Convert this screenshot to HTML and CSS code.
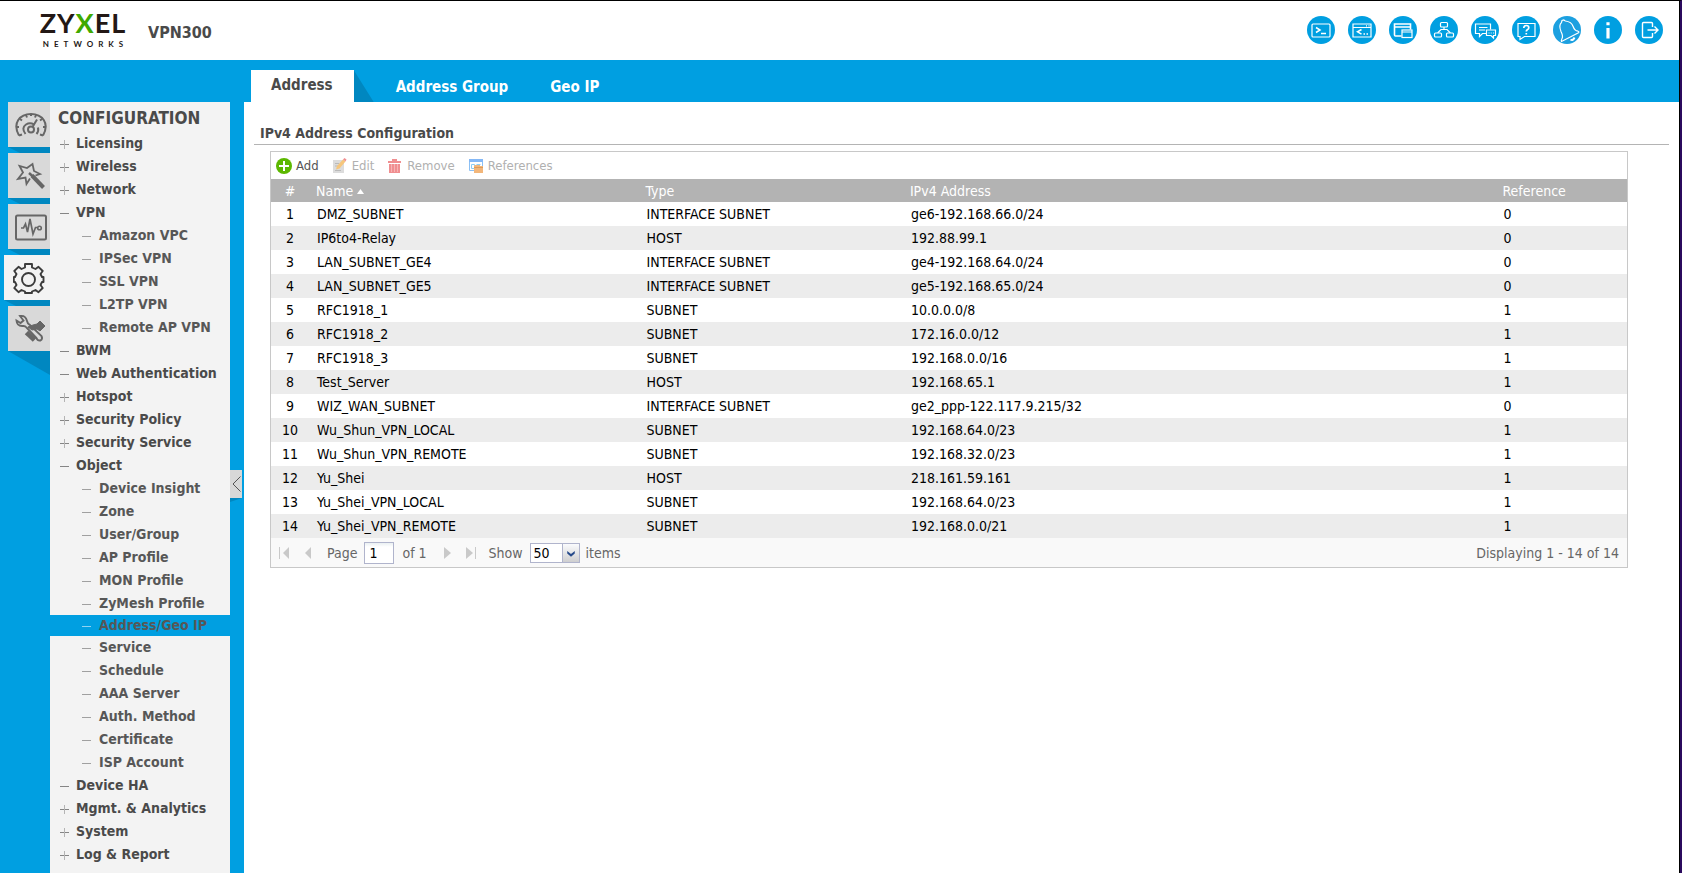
FILE: index.html
```html
<!DOCTYPE html>
<html lang="en">
<head>
<meta charset="utf-8">
<title>VPN300</title>
<link rel="stylesheet" href="styles.css">
</head>
<body>
<div class="app">
<header class="topbar">
  <div class="logo"><span class="logo-name">ZY<span class="logo-x">X</span>EL</span><span class="logo-sub">NETWORKS</span></div>
  <h1 class="model">VPN300</h1>
  <nav class="tools" aria-label="Tools">
    <button class="tool" aria-label="Web console"><svg viewBox="0 0 28 28"><rect x="5" y="8" width="18" height="13" rx="1"/><path d="M9 11.500l4 2.500-4 2.500M14 17.500h5" stroke-width="1.500"/></svg></button>
    <button class="tool" aria-label="CLI"><svg viewBox="0 0 28 28"><path d="M5 8h18v13h-18zM5 11.500h18M18 9.800h1M20.500 9.800h1"/><path d="M13.500 13.500l-4 2.300 4 2.300M15.500 18h1.500M18.500 18h1.500" stroke-width="1.500"/></svg></button>
    <button class="tool" aria-label="Object reference"><svg viewBox="0 0 28 28"><path d="M12.500 20H6.500q-1 0-1-1V8h16v5.500M5.500 11h16" stroke-width="1.600"/><rect x="13" y="14" width="10" height="7.500"/><path d="M13 16h10"/></svg></button>
    <button class="tool" aria-label="Site map"><svg viewBox="0 0 28 28"><rect x="10.500" y="6.500" width="7" height="4.500" rx="1"/><rect x="4.500" y="17" width="7" height="4" rx="1"/><rect x="16.500" y="17" width="7" height="4" rx="1"/><path d="M14 11v2.500M8 17v-.5l3-3h6l3 3v.5"/></svg></button>
    <button class="tool" aria-label="Forum"><svg viewBox="0 0 28 28"><path d="M15 17.500h-3.500l-3 3v-3H4.500V8h15v5.500M8 11.500h8.500M8 14h6"/><path d="M15.500 14h9v5.500h-2v2.500l-2.500-2.500h-4.500zM17.500 17h1M19.700 17h1M21.900 17h1"/></svg></button>
    <button class="tool" aria-label="Help"><svg viewBox="0 0 28 28"><path d="M6 7.500h17v13H12.500L8 23.500v-3H6z"/><path d="M11.800 12q0-2.500 2.500-2.500t2.500 2.200q0 1.200-1.500 2-1 .6-1 1.700M14.300 17v1.600" stroke-width="1.700"/></svg></button>
    <button class="tool tool-bell" aria-label="Notifications"><svg viewBox="0 0 28 28"><path d="M8.500 25.500q-.5-1 .3-2.500Q10.500 20.500 8 15.500 5.500 9 8.500 6.500l.5-2 1.800-.5 1.500 1q6.200.7 7.700 5.200 1.500 4.500 5 5 1.500.5.500 1.500z"/><path d="M17.500 23.500q2.500 1.500 4-2" stroke-width="2"/></svg></button>
    <button class="tool" aria-label="About"><svg viewBox="0 0 28 28"><path d="M14 6.300v3" stroke-width="3.200"/><path d="M14 12v10.500" stroke-width="3.200"/></svg></button>
    <button class="tool" aria-label="Log out"><svg viewBox="0 0 28 28"><path d="M17.500 11V7.500q0-1-1-1h-8q-1 0-1 1v13q0 1 1 1h8q1 0 1-1V17M12.500 14H23M19.500 10.500L23 14l-3.500 3.500" stroke-width="1.400"/></svg></button>
  </nav>
</header>
<div class="body">
  <nav class="rail" aria-label="Sections">
    <button class="rail-item" aria-label="Dashboard"><svg viewBox="0 0 32 32"><g stroke-width="2"><path d="M4 26.500C-3 14 5 5 16 5s19 9 12 21.500"/><path d="M4 26.500l3-1M28 26.500l-3-1M1 18h3M31 18h-3M5 10l2 1.500M27 10l-2 1.500M11 6l1 2.500M21 6l-1 2.500M16 5v2"/><path d="M10.500 25q-4.500-6 .5-9.500 4-2.500 8 0M21.500 25q2.500-3 1.500-6.500"/><circle cx="16" cy="20.500" r="3"/><path d="M17.500 18L22 10.500"/></g></svg></button>
    <button class="rail-item" aria-label="Quick setup"><svg viewBox="0 0 32 32"><path d="M20.500 15.500L25 14l-6-3-1.500-7L12 8 4.500 6l3.500 6.500-5 6.500 7.500-1.500L11.500 24l3.500-5.500" stroke-width="1.800"/><path d="M14 13l4 3.500" stroke-width="2.500"/><path d="M17 15.500L28.500 27.500" stroke-width="4"/></svg></button>
    <button class="rail-item" aria-label="Monitoring"><svg viewBox="0 0 32 32"><rect x="1" y="4.500" width="30" height="24" rx="1.500" stroke-width="2"/><path d="M6 17h2.500l2-4 2 8 2.500-13 3 15 2.500-6.500h2" stroke-width="1.700"/><circle cx="24.500" cy="17" r="1.800" stroke-width="1.600"/></svg></button>
    <button class="rail-item is-active" aria-label="Configuration" aria-current="page"><svg viewBox="0 0 32 32"><path d="M12 2h7v3.500l3.500 1.500 3-2.200 4.200 4.200-2.200 3 1.500 3h1.500v5h-1.500l-1.500 3 2.200 3-4.200 4.200-3-2.200-3.500 1.500V31h-7v-1.500L8.500 28l-3 2.200L1.300 26l2.200-3L2 20H.8v-5H2l1.500-3-2.200-3 4.200-4.200 3 2.200L12 5.500z" stroke-width="1.900" stroke-linejoin="round"/><circle cx="15.500" cy="17.500" r="6.500" stroke-width="1.900"/></svg></button>
    <button class="rail-item" aria-label="Maintenance"><svg viewBox="0 0 32 32"><path d="M5 3l3.500 4.500L5.500 10 1.500 7.500Q2 13.500 8 13q2-.3 3.500 1.500L21.500 25q1 3 4 2.500 2.500-1.500 1-4.500L15 12Q12.500 11 12 8 10.500 2 5 3z" stroke-width="1.900"/><path d="M11.500 19.500l8 7.500" stroke-width="5"/><path d="M13 14l5-2 4-1 3-3 5 5-5 5-3-2-5 1z" class="solid"/></svg></button>
    <div class="rail-tail"></div>
  </nav>
  <aside class="sidebar">
    <h2 class="side-title">CONFIGURATION</h2>
    <ul class="tree">
      <li><a class="node plus" href="#">Licensing</a></li>
      <li><a class="node plus" href="#">Wireless</a></li>
      <li><a class="node plus" href="#">Network</a></li>
      <li><a class="node" href="#">VPN</a>
        <ul class="branch">
          <li><a class="node" href="#">Amazon VPC</a></li>
          <li><a class="node" href="#">IPSec VPN</a></li>
          <li><a class="node" href="#">SSL VPN</a></li>
          <li><a class="node" href="#">L2TP VPN</a></li>
          <li><a class="node" href="#">Remote AP VPN</a></li>
        </ul>
      </li>
      <li><a class="node" href="#">BWM</a></li>
      <li><a class="node" href="#">Web Authentication</a></li>
      <li><a class="node plus" href="#">Hotspot</a></li>
      <li><a class="node plus" href="#">Security Policy</a></li>
      <li><a class="node plus" href="#">Security Service</a></li>
      <li><a class="node" href="#">Object</a>
        <ul class="branch">
          <li><a class="node" href="#">Device Insight</a></li>
          <li><a class="node" href="#">Zone</a></li>
          <li><a class="node" href="#">User/Group</a></li>
          <li><a class="node" href="#">AP Profile</a></li>
          <li><a class="node" href="#">MON Profile</a></li>
          <li><a class="node" href="#">ZyMesh Profile</a></li>
          <li><a class="node is-selected" href="#" aria-current="page">Address/Geo IP</a></li>
          <li><a class="node" href="#">Service</a></li>
          <li><a class="node" href="#">Schedule</a></li>
          <li><a class="node" href="#">AAA Server</a></li>
          <li><a class="node" href="#">Auth. Method</a></li>
          <li><a class="node" href="#">Certificate</a></li>
          <li><a class="node" href="#">ISP Account</a></li>
        </ul>
      </li>
      <li><a class="node" href="#">Device HA</a></li>
      <li><a class="node plus" href="#">Mgmt. &amp; Analytics</a></li>
      <li><a class="node plus" href="#">System</a></li>
      <li><a class="node plus" href="#">Log &amp; Report</a></li>
    </ul>
  </aside>
  <div class="gutter"><button class="collapse" aria-label="Collapse menu"><svg viewBox="0 0 12 28"><path d="M10.500 6.500L3 14l7.500 7.500"/></svg></button></div>
  <main class="main">
    <nav class="tabs" aria-label="Address pages">
      <a class="tab is-current" href="#" aria-current="page">Address</a>
      <a class="tab" href="#">Address Group</a>
      <a class="tab" href="#">Geo IP</a>
    </nav>
    <section class="content">
      <h2 class="section-title">IPv4 Address Configuration</h2>
      <div class="panel">
        <div class="toolbar">
          <button class="action"><svg viewBox="0 0 16 16"><circle cx="8" cy="8" r="8" fill="#5cb800"/><path d="M8 3v10M3 8h10" stroke="#fff" stroke-width="2"/></svg>Add</button>
          <button class="action" disabled><svg viewBox="0 0 16 16"><path d="M1 2h11v13H1z" fill="#dcdcdc"/><path d="M3 5.500h4M3 8h3M3 12.500h6" stroke="#b9b9b9"/><path d="M4 11.500l1-3.500 6-6.500 2.500 2L7.500 10.500z" fill="#f6c67c"/><path d="M11 1.500l1.500-1.500 2 1.500-1 2z" fill="#f08e90"/></svg>Edit</button>
          <button class="action" disabled><svg viewBox="0 0 16 16"><path d="M1 3h13v2H1zM5 1h5v2H5zM2 6h11v9H2z" fill="#f08e90"/><path d="M4.500 6v8M7.500 6v8M10.500 6v8" stroke="#f6b4b5"/></svg>Remove</button>
          <button class="action" disabled><svg viewBox="0 0 16 16"><path d="M1.500 2.500h13v10h-13z" fill="#fff" stroke="#8cc0f4"/><path d="M1 1h14v3H1z" fill="#84b8f6"/><path d="M3.500 6.500h3v4h-3zM8.500 6.500h4" fill="none" stroke="#8ccdf4"/><path d="M6 8l1-1h5v1h3v7H6z" fill="#f2b67a"/><path d="M6 9.500h9" stroke="#dd9c5a"/></svg>References</button>
        </div>
        <table class="grid">
          <colgroup><col class="c-num"><col class="c-name"><col class="c-type"><col class="c-addr"><col class="c-ref"></colgroup>
          <thead><tr><th>#</th><th>Name <svg class="sort" viewBox="0 0 7 5"><path d="M0 5l3.500-5L7 5z"/></svg></th><th>Type</th><th>IPv4 Address</th><th>Reference</th></tr></thead>
          <tbody>
            <tr><td>1</td><td>DMZ_SUBNET</td><td>INTERFACE SUBNET</td><td>ge6-192.168.66.0/24</td><td>0</td></tr>
            <tr><td>2</td><td>IP6to4-Relay</td><td>HOST</td><td>192.88.99.1</td><td>0</td></tr>
            <tr><td>3</td><td>LAN_SUBNET_GE4</td><td>INTERFACE SUBNET</td><td>ge4-192.168.64.0/24</td><td>0</td></tr>
            <tr><td>4</td><td>LAN_SUBNET_GE5</td><td>INTERFACE SUBNET</td><td>ge5-192.168.65.0/24</td><td>0</td></tr>
            <tr><td>5</td><td>RFC1918_1</td><td>SUBNET</td><td>10.0.0.0/8</td><td>1</td></tr>
            <tr><td>6</td><td>RFC1918_2</td><td>SUBNET</td><td>172.16.0.0/12</td><td>1</td></tr>
            <tr><td>7</td><td>RFC1918_3</td><td>SUBNET</td><td>192.168.0.0/16</td><td>1</td></tr>
            <tr><td>8</td><td>Test_Server</td><td>HOST</td><td>192.168.65.1</td><td>1</td></tr>
            <tr><td>9</td><td>WIZ_WAN_SUBNET</td><td>INTERFACE SUBNET</td><td>ge2_ppp-122.117.9.215/32</td><td>0</td></tr>
            <tr><td>10</td><td>Wu_Shun_VPN_LOCAL</td><td>SUBNET</td><td>192.168.64.0/23</td><td>1</td></tr>
            <tr><td>11</td><td>Wu_Shun_VPN_REMOTE</td><td>SUBNET</td><td>192.168.32.0/23</td><td>1</td></tr>
            <tr><td>12</td><td>Yu_Shei</td><td>HOST</td><td>218.161.59.161</td><td>1</td></tr>
            <tr><td>13</td><td>Yu_Shei_VPN_LOCAL</td><td>SUBNET</td><td>192.168.64.0/23</td><td>1</td></tr>
            <tr><td>14</td><td>Yu_Shei_VPN_REMOTE</td><td>SUBNET</td><td>192.168.0.0/21</td><td>1</td></tr>
          </tbody>
        </table>
        <div class="pager">
          <button class="step" aria-label="First page" disabled><svg viewBox="0 0 12 14"><path d="M10 1v12L4 7z"/><path d="M0 1h1v12H0z"/></svg></button>
          <button class="step" aria-label="Previous page" disabled><svg viewBox="0 0 12 14"><path d="M8 1v12L2 7z"/></svg></button>
          <label class="field">Page <input class="page-no" type="text" value="1"></label>
          <span class="total">of 1</span>
          <button class="step" aria-label="Next page" disabled><svg viewBox="0 0 12 14"><path d="M3 1v12l7-6z"/></svg></button>
          <button class="step" aria-label="Last page" disabled><svg viewBox="0 0 12 14"><path d="M1 1v12l7-6z"/><path d="M10 1h1v12h-1z"/></svg></button>
          <label class="field show" for="size">Show</label>
          <span class="combo"><select id="size" class="size"><option>50</option></select><svg class="caret" viewBox="0 0 17 18"><path d="M4.500 7v2.500L8.500 13l4-3.500V7l-4 3z"/></svg></span>
          <span class="items">items</span>
          <span class="status">Displaying 1 - 14 of 14</span>
        </div>
      </div>
    </section>
  </main>
</div>
</div>
</body>
</html>
```
FILE: styles.css
```css
:root {
  --blue: #009fe1;
  --shade: #0087c0;
  --ink: #4a4a4a;
  --line: #c8c8c8;
}
* { box-sizing: border-box; }
body {
  margin: 0;
  font-family: "DejaVu Sans Condensed", "Noto Sans", sans-serif;
  font-size: 14px;
  color: var(--ink);
  background: #fff;
}
h1, h2, ul { margin: 0; padding: 0; }
ul { list-style: none; }
a { color: inherit; text-decoration: none; }
button { font: inherit; color: inherit; border: 0; padding: 0; background: none; }
svg { display: block; }

.app {
  display: flex;
  flex-direction: column;
  min-height: 100vh;
  border-top: 1px solid #000;
  border-right: 2px solid #2b0a5e;
  box-shadow: inset -1px 0 #000;
  padding-right: 1px;
}

.topbar {
  display: flex;
  align-items: center;
  height: 59px;
  padding: 0 16px 0 38px;
}
.logo {
  display: flex;
  flex-direction: column;
  align-items: center;
  width: 90px;
  padding-bottom: 6px;
  font-family: Lato, sans-serif;
  color: #231815;
}
.logo-name { font-size: 27px; font-weight: 700; line-height: 32px; letter-spacing: 1px; }
.logo-x { color: #3fa900; }
.logo-sub { padding-left: 5px; font-size: 8px; font-weight: 700; line-height: 10px; letter-spacing: 5px; }
.model { margin-left: 20px; font-size: 16px; line-height: 20px; padding-top: 4px; }
.tools { display: flex; gap: 13px; margin-left: auto; padding-bottom: 2px; }
.tool { width: 28px; height: 28px; border-radius: 50%; background: var(--blue); overflow: hidden; }
.tool svg { width: 28px; height: 28px; fill: none; stroke: #fff; stroke-width: 1.2; }
.tool-bell { background: #1ca0e0; }

.body { display: flex; flex: 1; background: var(--blue); }

.rail {
  display: flex;
  flex-direction: column;
  width: 50px;
  padding: 42px 0 0 4px;
}
.rail-item {
  position: relative;
  height: 45px;
  margin: 0 0 6px 4px;
  padding-right: 3px;
  display: grid;
  place-items: center end;
  background: #d9d9d9;
}
.rail-item::after {
  content: "";
  position: absolute;
  top: 45px;
  left: 0;
  right: 0;
  height: 6px;
  background: var(--shade);
  clip-path: polygon(0 0, 100% 0, 100% 100%, 12px 100%);
}
.rail-item.is-active { margin-left: 0; padding-right: 5px; background: #f3f3f3; }
.rail-item:nth-child(5) { margin-bottom: 0; }
.rail-item:nth-child(5)::after { display: none; }
.rail-item svg { width: 32px; height: 32px; fill: none; stroke: #666; }
.rail-item.is-active svg { stroke: #3c3c3c; }
.rail-item .solid { fill: #666; }
.rail-tail {
  height: 24px;
  margin-left: 4px;
  background: var(--shade);
  clip-path: polygon(0 0, 100% 0, 100% 100%);
}

.sidebar { width: 180px; margin-top: 42px; background: #f3f3f3; }
.side-title { padding: 5px 0 0 8px; font-size: 17px; line-height: 22px; }
.tree { padding-top: 3px; }
.node {
  position: relative;
  display: block;
  padding-left: 26px;
  font-weight: 700;
  line-height: 23px;
  white-space: nowrap;
}
.node::before {
  content: "";
  position: absolute;
  left: 10px;
  top: 50%;
  width: 9px;
  height: 1px;
  background: #858585;
}
.node.plus::after {
  content: "";
  position: absolute;
  left: 14px;
  top: 50%;
  width: 1px;
  height: 9px;
  margin-top: -4px;
  background: #b4b4b4;
}
.branch .node { padding-left: 49px; color: #575757; }
.branch .node::before { left: 32px; background: #a0a0a0; }
.branch .node.is-selected { background: var(--blue); line-height: 21px; }
.branch .node.is-selected::before { background: #8fd3f2; }

.gutter { position: relative; width: 14px; }
.collapse {
  position: absolute;
  top: 410px;
  left: 0;
  width: 12px;
  height: 28px;
  background: #d8d8d8;
}
.collapse::after {
  content: "";
  position: absolute;
  top: 28px;
  left: 0;
  width: 12px;
  height: 4px;
  background: var(--shade);
  clip-path: polygon(0 0, 100% 0, 0 100%);
}
.collapse svg { width: 12px; height: 28px; fill: none; stroke: #555; }

.main { display: flex; flex: 1; flex-direction: column; min-width: 0; }
.tabs { display: flex; gap: 42px; padding: 10px 7px 0; color: #fff; }
.tab { position: relative; font-size: 15px; font-weight: 700; line-height: 30px; padding-top: 2px; white-space: nowrap; }
.tab.is-current { padding: 0 21px 2px 20px; background: #fff; color: var(--ink); }
.tab.is-current::after {
  content: "";
  position: absolute;
  left: 100%;
  top: 0;
  width: 20px;
  height: 32px;
  background: var(--shade);
  clip-path: polygon(0 0, 100% 100%, 0 100%);
}
.content { flex: 1; padding: 21px 10px 20px; background: #fff; }
.section-title {
  padding: 0 6px;
  border-bottom: 1px solid #b4b4b4;
  font-size: 14px;
  line-height: 21px;
}

.panel { margin: 6px 41px 0 16px; border: 1px solid var(--line); }
.toolbar { display: flex; align-items: center; gap: 13px; height: 27px; padding: 0 5px; }
.action { display: flex; align-items: center; gap: 4px; font-size: 13px; color: #555; }
.action svg { width: 16px; height: 16px; }
.action:disabled { color: #b0b0b0; }

.grid { width: 100%; table-layout: fixed; border-collapse: collapse; color: #000; }
.c-num { width: 38px; }
.c-name { width: 24.3%; }
.c-type { width: 19.5%; }
.c-ref { width: 9.7%; }
.grid th, .grid td { padding: 0 7px; text-align: left; font-weight: 400; white-space: nowrap; }
.grid th { height: 23px; }
.grid td { height: 24px; padding-left: 8px; }
.grid th:first-child, .grid td:first-child { padding: 0; text-align: center; }
.grid thead { background: #b3b3b3; color: #fff; }
.grid tbody tr:nth-child(even) { background: #ececec; }
.sort { display: inline-block; width: 7px; height: 5px; vertical-align: 2px; fill: #fff; }

.pager { display: flex; align-items: center; height: 29px; padding: 0 8px; background: #f9f9f9; color: #666; }
.step { width: 12px; margin-right: 12px; }
.step svg { width: 12px; height: 14px; fill: #c9c9c9; }
.field { display: flex; align-items: center; gap: 7px; }
.page-no {
  width: 30px;
  height: 22px;
  padding: 0 4px;
  border: 1px solid #b0b4cc;
  font: inherit;
  color: #000;
  background: linear-gradient(#eaf0f2, #fff 4px);
}
.total { margin: 0 14px 0 8px; }
.show { margin-right: 7px; }
.combo { position: relative; width: 50px; height: 20px; }
.size {
  width: 100%;
  height: 100%;
  padding: 0 3px;
  appearance: none;
  border: 1px solid #b0b4cc;
  border-radius: 0;
  font: inherit;
  color: #000;
  background: #fff;
}
.caret {
  position: absolute;
  top: 1px;
  right: 1px;
  width: 17px;
  height: 18px;
  border-left: 1px solid #b0b4cc;
  background: linear-gradient(#fafbfd, #cfcfd0);
  fill: #264a8a;
  pointer-events: none;
}
.items { margin-left: 6px; }
.status { margin-left: auto; }
```
